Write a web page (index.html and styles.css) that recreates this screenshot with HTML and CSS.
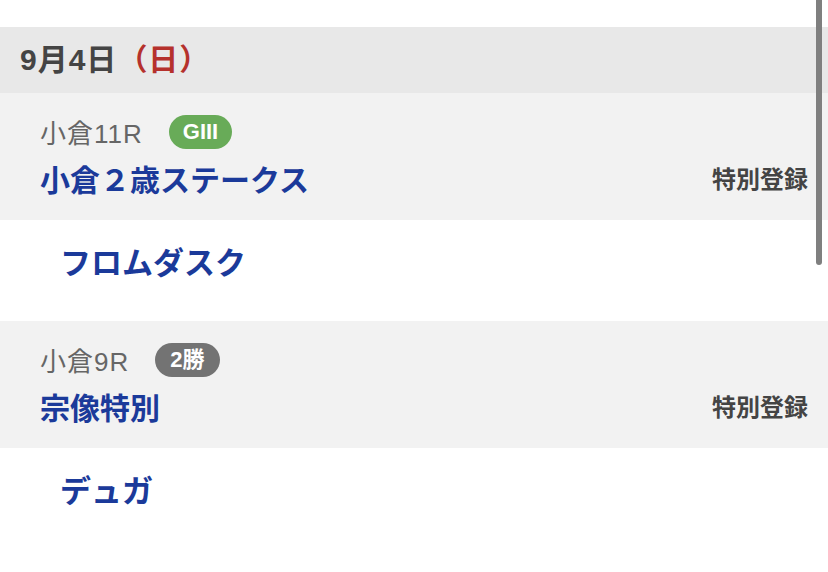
FILE: index.html
```html
<!DOCTYPE html>
<html lang="ja">
<head>
<meta charset="utf-8">
<link rel="stylesheet" href="styles.css">
</head>
<body>
<div class="page">
  <div class="top-space"></div>
  <div class="date-header">9月4日<span class="dow">（日）</span></div>

  <div class="race">
    <div class="race-meta">
      <span class="race-no">小倉11R</span>
      <span class="badge badge-g3">GIII</span>
    </div>
    <div class="race-title-row">
      <span class="race-title">小倉２歳ステークス</span>
      <span class="reg">特別登録</span>
    </div>
  </div>
  <div class="horse"><span class="horse-name">フロムダスク</span></div>

  <div class="race">
    <div class="race-meta">
      <span class="race-no">小倉9R</span>
      <span class="badge badge-class">2勝</span>
    </div>
    <div class="race-title-row">
      <span class="race-title">宗像特別</span>
      <span class="reg">特別登録</span>
    </div>
  </div>
  <div class="horse horse-last"><span class="horse-name">デュガ</span></div>

  <div class="scrollbar"></div>
</div>
</body>
</html>
```

FILE: styles.css
```css
html, body {
  margin: 0;
  padding: 0;
  background: #ffffff;
}
body {
  font-family: "Liberation Sans", "Noto Sans CJK JP", sans-serif;
  width: 828px;
  height: 572px;
  overflow: hidden;
}
.page {
  position: relative;
  display: flex;
  flex-direction: column;
}
.top-space {
  height: 27px;
}
.date-header {
  height: 66px;
  box-sizing: border-box;
  background: #e8e8e8;
  display: flex;
  align-items: center;
  padding-left: 20px;
  font-size: 30px;
  font-weight: 700;
  color: #444444;
  line-height: 1;
  letter-spacing: 1px;
}
.dow {
  color: #b5312c;
}
.race {
  height: 127px;
  box-sizing: border-box;
  background: #f2f2f2;
  padding: 22px 20px 0 40px;
  display: flex;
  flex-direction: column;
}
.race-meta {
  height: 34px;
  display: flex;
  align-items: center;
}
.race-no {
  font-size: 26px;
  color: #666666;
  line-height: 1;
  letter-spacing: 1px;
  margin-right: 26px;
  padding-top: 3px;
}
.badge {
  height: 34px;
  box-sizing: border-box;
  padding: 0 14px;
  border-radius: 17px;
  display: flex;
  align-items: center;
  color: #ffffff;
  font-size: 22px;
  font-weight: 700;
  line-height: 1;
}
.badge-g3 {
  background: #68ab58;
}
.badge-class {
  background: #737373;
  padding: 0 15px;
}
.race-title-row {
  margin-top: 9px;
  height: 40px;
  display: flex;
  align-items: center;
  justify-content: space-between;
}
.race-title {
  font-family: "Noto Sans CJK JP", sans-serif;
  font-size: 30px;
  font-weight: 700;
  color: #1b3a9a;
  line-height: 1;
}
.reg {
  font-family: "Noto Sans CJK JP", sans-serif;
  font-size: 24px;
  font-weight: 700;
  color: #444444;
  line-height: 1;
}
.horse {
  height: 101px;
  box-sizing: border-box;
  padding: 20px 0 0 60px;
  background: #ffffff;
}
.horse-last {
  height: 124px;
}
.horse-name {
  display: flex;
  align-items: center;
  height: 40px;
  font-family: "Noto Sans CJK JP", sans-serif;
  font-size: 31px;
  font-weight: 700;
  color: #1b3a9a;
  line-height: 1;
}
.scrollbar {
  position: absolute;
  top: 0;
  left: 816px;
  width: 6px;
  height: 265px;
  border-radius: 0 0 3px 3px;
  background: #7f7f7f;
}
```
